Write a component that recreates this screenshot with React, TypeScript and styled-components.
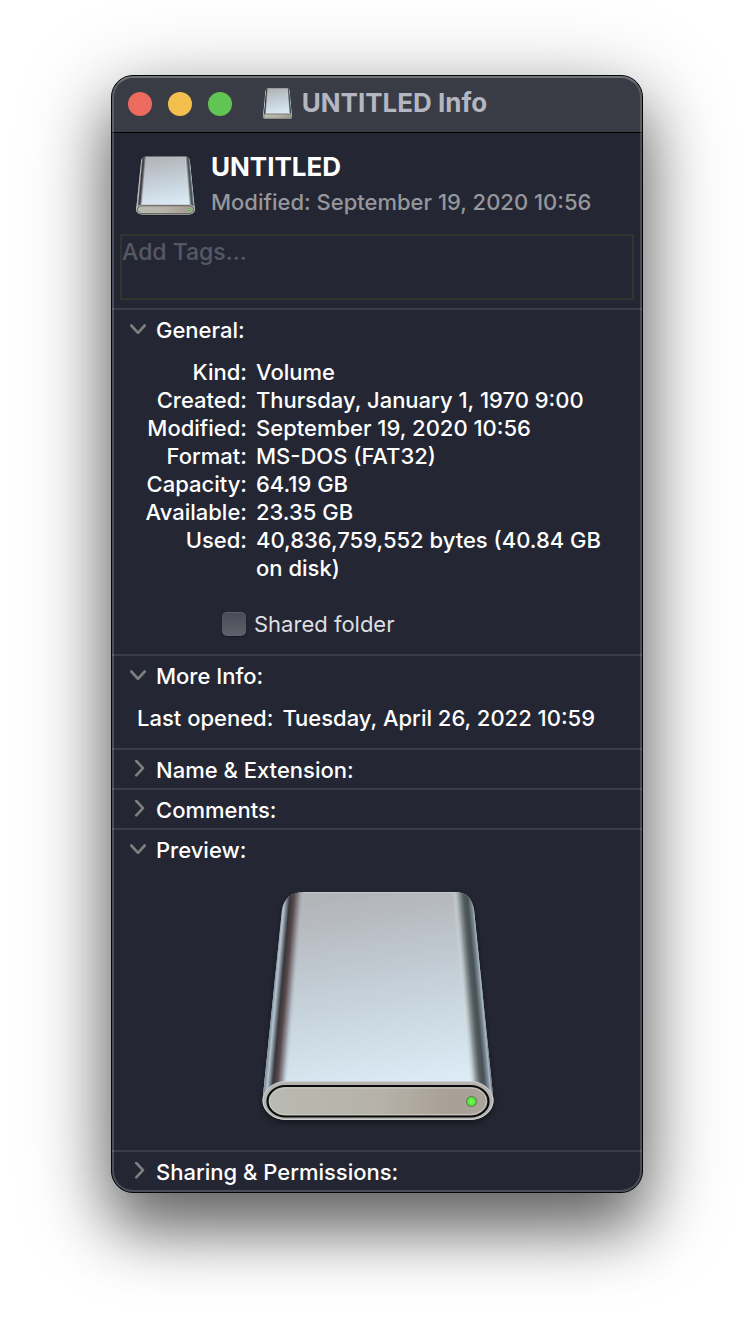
import React, { useId, useState } from "react";
import styled, { createGlobalStyle } from "styled-components";

const GlobalStyle = createGlobalStyle`
  * { box-sizing: border-box; }
  body {
    margin: 0;
    background: #ffffff;
    font-family: Inter, "Liberation Sans", sans-serif;
    font-size: 22px;
    line-height: 28px;
  }
  h1, h2, p, dl, dd { margin: 0; }
  button, textarea { font: inherit; color: inherit; }
`;

const Desktop = styled.main`
  padding: 75px 111px 147px;
  overflow: hidden;
`;

const Window = styled.section`
  position: relative;
  max-width: 640px;
  margin: 0 auto;
  padding-bottom: 2px;
  border: 1px solid #050608;
  border-radius: 22px;
  background: #242733;
  color: #ffffff;
  box-shadow: 0 36px 60px rgba(0, 0, 0, 0.46), 0 20px 90px rgba(0, 0, 0, 0.34);

  &::after {
    content: "";
    position: absolute;
    inset: 0;
    border: 2px solid rgba(255, 255, 255, 0.18);
    border-top-color: rgba(255, 255, 255, 0.28);
    border-radius: 21px;
    pointer-events: none;
  }
`;

const TitleBar = styled.header`
  display: grid;
  grid-template-columns: 1fr auto 1fr;
  align-items: center;
  height: 57px;
  padding: 0 20px 0 16px;
  border-bottom: 1px solid #000000;
  border-radius: 21px 21px 0 0;
  background: #3a3c45;
`;

const Lights = styled.div`
  display: flex;
  gap: 16px;
`;

const Light = styled.button<{ $color: string }>`
  width: 24px;
  height: 24px;
  padding: 0;
  border: 0;
  border-radius: 50%;
  background: ${(p) => p.$color};
`;

const Title = styled.div`
  display: flex;
  align-items: center;
  gap: 10px;
  padding-bottom: 2px;
  color: #b4b7c2;
  font-size: 26px;
  font-weight: 700;
`;

const Summary = styled.div`
  display: flex;
  align-items: center;
  gap: 16px;
  padding: 20px 24px 17px;
`;

const VolumeName = styled.h1`
  font-size: 26px;
  font-weight: 700;
  line-height: 28px;
`;

const VolumeDate = styled.p`
  padding-top: 7px;
  padding-bottom: 1px;
  color: #96979c;
  font-weight: 500;
`;

const Tags = styled.textarea`
  display: block;
  width: calc(100% - 16px);
  height: 66px;
  margin: 0 8px 8px;
  padding: 2px 0;
  border: 2px solid #33342f;
  background: transparent;
  font-size: 23px;
  font-weight: 500;
  resize: none;
  outline: none;

  &::placeholder {
    color: #565963;
    opacity: 1;
  }
`;

const Panel = styled.section`
  border-top: 2px solid #3a3d48;
`;

const Disclosure = styled.button`
  display: flex;
  align-items: center;
  gap: 8px;
  width: 100%;
  height: 38px;
  padding: 2px 16px 0;
  border: 0;
  background: none;
  text-align: left;
`;

const PanelTitle = styled.span`
  font-weight: 500;
`;

const Details = styled.dl<{ $labelWidth: string }>`
  display: grid;
  grid-template-columns: ${(p) => p.$labelWidth} 1fr;
  column-gap: 9px;
  padding: 10px 24px 0 25px;
  font-weight: 500;
`;

const Label = styled.dt`
  text-align: right;
  white-space: nowrap;
`;

const SharedRow = styled.label`
  display: flex;
  align-items: center;
  gap: 8px;
  width: max-content;
  margin: 28px 0 16px 110px;
  color: #dedfe1;
`;

const Check = styled.input`
  appearance: none;
  width: 24px;
  height: 24px;
  margin: 0;
  border-radius: 5px;
  background: linear-gradient(#484a55, #5f616b);
  box-shadow: inset 0 1px 0 rgba(255, 255, 255, 0.12), 0 1px 2px rgba(0, 0, 0, 0.4);

  &:checked { background: #2f7cf6; }
`;

const Spacer = styled.div`
  height: 16px;
`;

const PreviewArea = styled.div`
  display: flex;
  justify-content: center;
  padding: 22px 0 28px 2px;
`;

function Drive({ width, height }: { width: number; height: number }) {
  const id = useId().replace(/[^a-zA-Z0-9]/g, "");
  const body =
    "M42 2H193C204 2 210 8 212 20L231 206C231 216 222 222 210 222H22C8 222 1 216 1 206L20 20C22 8 30 2 42 2Z";
  return (
    <svg width={width} height={height} viewBox="0 0 232 232" preserveAspectRatio="none" overflow="visible" aria-hidden="true">
      <defs>
        <linearGradient id={`${id}t`} x1="0.4" y1="0" x2="0.55" y2="0.88">
          <stop offset="0" stopColor="#b2b4b8" />
          <stop offset="0.3" stopColor="#bdc4cb" />
          <stop offset="0.65" stopColor="#cad8e1" />
          <stop offset="1" stopColor="#dbeaf4" />
        </linearGradient>
        <linearGradient id={`${id}l`} gradientUnits="userSpaceOnUse" x1="11" y1="110" x2="33" y2="112">
          <stop offset="0" stopColor="#8797a5" />
          <stop offset="0.1" stopColor="#b4c3cf" />
          <stop offset="0.18" stopColor="#8b969f" />
          <stop offset="0.34" stopColor="#37363a" />
          <stop offset="0.54" stopColor="#59494b" />
          <stop offset="0.74" stopColor="#84828a" stopOpacity="0.8" />
          <stop offset="1" stopColor="#c3ced8" stopOpacity="0" />
        </linearGradient>
        <linearGradient id={`${id}r`} gradientUnits="userSpaceOnUse" x1="200" y1="112" x2="222" y2="110">
          <stop offset="0" stopColor="#dde7eb" stopOpacity="0" />
          <stop offset="0.14" stopColor="#c3cccf" stopOpacity="0.6" />
          <stop offset="0.32" stopColor="#899295" />
          <stop offset="0.5" stopColor="#535c5f" />
          <stop offset="0.66" stopColor="#464f53" />
          <stop offset="0.84" stopColor="#7b8893" />
          <stop offset="0.93" stopColor="#a9b8c5" />
          <stop offset="1" stopColor="#68737d" />
        </linearGradient>
        <linearGradient id={`${id}f`} x1="0" y1="0" x2="1" y2="0">
          <stop offset="0" stopColor="#b9bab2" />
          <stop offset="0.5" stopColor="#b6b2a9" />
          <stop offset="0.85" stopColor="#a89f96" />
          <stop offset="1" stopColor="#aca59d" />
        </linearGradient>
        <radialGradient id={`${id}g`}>
          <stop offset="0" stopColor="#7cff58" />
          <stop offset="1" stopColor="#4bd735" />
        </radialGradient>
        <clipPath id={`${id}c`}>
          <path d={body} />
        </clipPath>
        <filter id={`${id}s`} x="-10%" y="-10%" width="120%" height="125%">
          <feDropShadow dx="0" dy="3" stdDeviation="3" floodColor="#000000" floodOpacity="0.45" />
        </filter>
      </defs>
      <g filter={`url(#${id}s)`}>
        <path d={body} fill={`url(#${id}t)`} />
        <rect x="0.5" y="191" width="231" height="39" rx="24" ry="19.5" fill="#bdbdb8" />
      </g>
      <g clipPath={`url(#${id}c)`}>
        <path d="M22 0H45L24 224H-2Z" fill={`url(#${id}l)`} />
        <path d="M187 0H212L234 224H209Z" fill={`url(#${id}r)`} />
        <path d="M42 2.500H193" stroke="#c5c7ca" strokeWidth="1" />
      </g>
      <rect x="1" y="191.500" width="230" height="38" rx="23" ry="19" fill="#b5b4ae" stroke="#ced1ce" strokeWidth="1" />
      <rect x="5.500" y="196" width="221" height="30.500" rx="18" ry="15.250" fill={`url(#${id}f)`} stroke="#080a0b" strokeWidth="2.200" />
      <rect x="7.500" y="198" width="217" height="26.500" rx="16" ry="13.250" fill="none" stroke="#cbcdc8" strokeWidth="0.800" />
      <circle cx="209.500" cy="211.500" r="5" fill={`url(#${id}g)`} stroke="#59774a" strokeWidth="1" />
    </svg>
  );
}

function Chevron({ open }: { open: boolean }) {
  return (
    <svg width="20" height="20" viewBox="0 0 20 20" fill="none" stroke="#7f7f80" strokeWidth="2.600" strokeLinecap="round" strokeLinejoin="round" aria-hidden="true">
      <path d={open ? "M3.300 5.500L10 12.800L16.700 5.500" : "M8.300 1L15 8.200L8.300 15.400"} />
    </svg>
  );
}

function Section({ title, open = false, children }: { title: string; open?: boolean; children?: React.ReactNode }) {
  const [expanded, setExpanded] = useState(open);
  return (
    <Panel>
      <Disclosure aria-expanded={expanded} onClick={() => setExpanded(!expanded)}>
        <Chevron open={expanded} />
        <PanelTitle>{title}</PanelTitle>
      </Disclosure>
      {expanded && children}
    </Panel>
  );
}

const general = [
  ["Kind:", "Volume"],
  ["Created:", "Thursday, January 1, 1970 9:00"],
  ["Modified:", "September 19, 2020 10:56"],
  ["Format:", "MS-DOS (FAT32)"],
  ["Capacity:", "64.19 GB"],
  ["Available:", "23.35 GB"],
  ["Used:", "40,836,759,552 bytes (40.84 GB on disk)"],
];

export default function App() {
  return (
    <Desktop>
      <GlobalStyle />
      <Window>
        <TitleBar>
          <Lights>
            <Light $color="#ed6a5e" aria-label="Close" />
            <Light $color="#f5bf4f" aria-label="Minimize" />
            <Light $color="#61c554" aria-label="Zoom" />
          </Lights>
          <Title>
            <Drive width={29} height={31} />
            <span>UNTITLED Info</span>
          </Title>
        </TitleBar>

        <Summary>
          <Drive width={59} height={59} />
          <div>
            <VolumeName>UNTITLED</VolumeName>
            <VolumeDate>Modified: September 19, 2020 10:56</VolumeDate>
          </div>
        </Summary>
        <Tags aria-label="Tags" placeholder="Add Tags..." />

        <Section title="General:" open>
          <Details $labelWidth="110px">
            {general.map(([label, value]) => (
              <React.Fragment key={label}>
                <Label>{label}</Label>
                <dd>{value}</dd>
              </React.Fragment>
            ))}
          </Details>
          <SharedRow>
            <Check type="checkbox" />
            Shared folder
          </SharedRow>
        </Section>

        <Section title="More Info:" open>
          <Details $labelWidth="max-content">
            <Label>Last opened:</Label>
            <dd>Tuesday, April 26, 2022 10:59</dd>
          </Details>
          <Spacer />
        </Section>

        <Section title="Name & Extension:" />
        <Section title="Comments:" />

        <Section title="Preview:" open>
          <PreviewArea>
            <Drive width={232} height={232} />
          </PreviewArea>
        </Section>

        <Section title="Sharing & Permissions:" />
      </Window>
    </Desktop>
  );
}
